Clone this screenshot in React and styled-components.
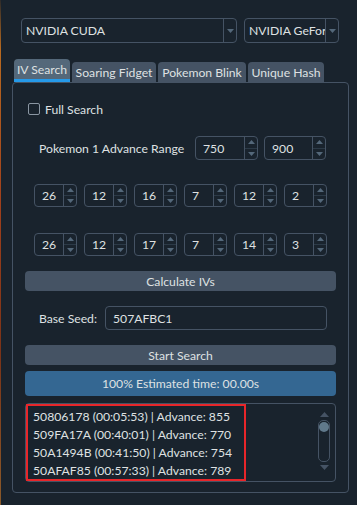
import React from "react";
import styled, { createGlobalStyle } from "styled-components";

const Global = createGlobalStyle`
  html, body { margin: 0; padding: 0; background: #19232D; }
  body { font-family: Lato, "Noto Sans", sans-serif; font-size: 12.2px; color: #DFE1E2; }
  * { box-sizing: border-box; }
`;

const Page = styled.div`
  width: 357px;
  height: 505px;
  background: #19232D;
  border-left: 1px solid;
  border-image: linear-gradient(180deg, #2a2a2a 0%, #b86a20 10%, #a0401c 40%, #7a3318 70%, #8a5a2a 100%) 1;
  padding: 18px 0 0 11px;
  display: flex;
  flex-direction: column;
`;

const ComboRow = styled.div`
  display: flex;
  gap: 7px;
  padding-left: 9px;
`;

const Combo = styled.div`
  width: ${p => p.$w}px;
  height: 25px;
  border: 1px solid #455364;
  border-radius: 4px;
  display: flex;
  align-items: center;
  overflow: hidden;
`;

const ComboText = styled.div`
  flex: 1;
  padding-left: 4px;
  white-space: nowrap;
  overflow: hidden;
`;

const ComboArrow = styled.div`
  width: 13px;
  align-self: stretch;
  border-left: 1px solid #455364;
  display: flex;
  align-items: center;
  justify-content: center;
`;

const TabBar = styled.div`
  display: flex;
  align-items: flex-end;
  gap: 2px;
  margin-top: 16px;
  padding-left: 2px;
  height: 23px;
`;

const Tab = styled.div`
  height: ${p => (p.$active ? 23 : 20)}px;
  background: ${p => (p.$active ? "#54687A" : "#455364")};
  border-radius: 4px 4px 0 0;
  display: flex;
  align-items: center;
  justify-content: center;
  white-space: nowrap;
  border-bottom: ${p => (p.$active ? "3px solid #259AE9" : "none")};
  padding-top: ${p => (p.$active ? "1px" : "0")};
  width: ${p => p.$w}px;
`;

const Pane = styled.div`
  width: 337px;
  height: 411px;
  border: 1px solid #455364;
  border-radius: 4px;
  display: flex;
  flex-direction: column;
  padding: 0 12px 0 12px;
`;

const CheckRow = styled.label`
  display: flex;
  align-items: center;
  gap: 5px;
  margin-top: 19px;
  padding-left: 3px;
  height: 14px;
`;

const CheckBox = styled.span`
  width: 12px;
  height: 12px;
  border: 1px solid #8a96a2;
  border-radius: 2px;
`;

const FormRow = styled.div`
  display: flex;
  align-items: center;
  margin-top: ${p => p.$mt}px;
  padding-left: 14px;
`;

const Label = styled.span`
  width: ${p => p.$w}px;
  flex: none;
  white-space: nowrap;
`;

const Spin = styled.div`
  width: ${p => p.$w}px;
  height: ${p => p.$h}px;
  margin-left: ${p => p.$ml ?? 0}px;
  border: 1px solid #455364;
  border-radius: 4px;
  display: flex;
  overflow: hidden;
  flex: none;
`;

const SpinValue = styled.div`
  flex: 1;
  display: flex;
  align-items: center;
  padding-left: 7px;
`;

const SpinArrows = styled.div`
  width: 13px;
  border-left: 1px solid #455364;
  display: flex;
  flex-direction: column;
`;

const SpinHalf = styled.div`
  flex: 1;
  display: flex;
  align-items: center;
  justify-content: center;
  border-top: ${p => (p.$bottom ? "1px solid #2c3a47" : "none")};
`;

const IVRow = styled.div`
  display: flex;
  gap: 7px;
  margin-top: ${p => p.$mt}px;
  padding-left: 9px;
`;

const Button = styled.div`
  height: 20px;
  margin-top: ${p => p.$mt}px;
  background: #455364;
  border-radius: 4px;
  display: flex;
  align-items: center;
  justify-content: center;
`;

const TextInput = styled.div`
  width: 222px;
  height: 24px;
  border: 1px solid #455364;
  border-radius: 4px;
  display: flex;
  align-items: center;
  padding-left: 7px;
`;

const Progress = styled.div`
  height: 25px;
  margin-top: 6px;
  background: #346792;
  border-radius: 4px;
  display: flex;
  align-items: center;
  justify-content: center;
`;

const List = styled.div`
  height: 79px;
  margin-top: 7px;
  border: 1px solid #455364;
  border-radius: 4px;
  display: flex;
  justify-content: space-between;
`;

const Highlight = styled.div`
  width: 220px;
  height: 77px;
  border: 2px solid #E8262A;
  padding: 2px 0 0 5px;
  display: flex;
  flex-direction: column;
`;

const Item = styled.div`
  height: 18px;
  line-height: 18px;
  white-space: nowrap;
`;

const ScrollBar = styled.div`
  width: 14px;
  margin-right: 4px;
  display: flex;
  flex-direction: column;
  align-items: center;
  padding-top: 8px;
`;

const Track = styled.div`
  width: 12px;
  height: 42px;
  margin: 3px 0 3px;
  border: 1px solid #455364;
  border-radius: 5px;
  display: flex;
  justify-content: center;
  padding-top: 1px;
`;

const Handle = styled.div`
  width: 10px;
  height: 10px;
  border-radius: 50%;
  background: #60798B;
`;

const Tri = ({ dir = "down", w = 7, h = 4, color = "#54687A" }) => (
  <svg width={w} height={h} viewBox={`0 0 ${w} ${h}`}>
    {dir === "down" ? (
      <polygon points={`0,0 ${w},0 ${w / 2},${h}`} fill={color} />
    ) : (
      <polygon points={`0,${h} ${w},${h} ${w / 2},0`} fill={color} />
    )}
  </svg>
);

const SpinBox = ({ value, w, h, ml }) => (
  <Spin $w={w} $h={h} $ml={ml}>
    <SpinValue>{value}</SpinValue>
    <SpinArrows>
      <SpinHalf>
        <Tri dir="up" />
      </SpinHalf>
      <SpinHalf $bottom>
        <Tri dir="down" />
      </SpinHalf>
    </SpinArrows>
  </Spin>
);

const row1 = [26, 12, 16, 7, 12, 2];
const row2 = [26, 12, 17, 7, 14, 3];
const results = [
  "50806178 (00:05:53) | Advance: 855",
  "509FA17A (00:40:01) | Advance: 770",
  "50A1494B (00:41:50) | Advance: 754",
  "50AFAF85 (00:57:33) | Advance: 789",
];

export default function App() {
  return (
    <>
      <Global />
      <Page>
        <ComboRow>
          <Combo $w={216}>
            <ComboText>NVIDIA CUDA</ComboText>
            <ComboArrow>
              <Tri />
            </ComboArrow>
          </Combo>
          <Combo $w={95}>
            <ComboText>NVIDIA GeFor</ComboText>
            <ComboArrow>
              <Tri />
            </ComboArrow>
          </Combo>
        </ComboRow>
        <TabBar>
          <Tab $active $w={56}>IV Search</Tab>
          <Tab $w={84}>Soaring Fidget</Tab>
          <Tab $w={88}>Pokemon Blink</Tab>
          <Tab $w={76}>Unique Hash</Tab>
        </TabBar>
        <Pane>
          <CheckRow>
            <CheckBox />
            Full Search
          </CheckRow>
          <FormRow $mt={20}>
            <Label $w={156}>Pokemon 1 Advance Range</Label>
            <SpinBox value="750" w={63} h={24} />
            <SpinBox value="900" w={62} h={24} ml={6} />
          </FormRow>
          <IVRow $mt={24}>
            {row1.map((v, i) => (
              <SpinBox key={i} value={v} w={43} h={23} />
            ))}
          </IVRow>
          <IVRow $mt={26}>
            {row2.map((v, i) => (
              <SpinBox key={i} value={v} w={43} h={23} />
            ))}
          </IVRow>
          <Button $mt={15}>Calculate IVs</Button>
          <FormRow $mt={15}>
            <Label $w={66}>Base Seed:</Label>
            <TextInput>507AFBC1</TextInput>
          </FormRow>
          <Button $mt={15}>Start Search</Button>
          <Progress>100% Estimated time: 00.00s</Progress>
          <List>
            <Highlight>
              {results.map(r => (
                <Item key={r}>{r}</Item>
              ))}
            </Highlight>
            <ScrollBar>
              <Tri dir="up" w={9} h={5} color="#455364" />
              <Track>
                <Handle />
              </Track>
              <Tri dir="down" w={9} h={5} color="#455364" />
            </ScrollBar>
          </List>
        </Pane>
      </Page>
    </>
  );
}
